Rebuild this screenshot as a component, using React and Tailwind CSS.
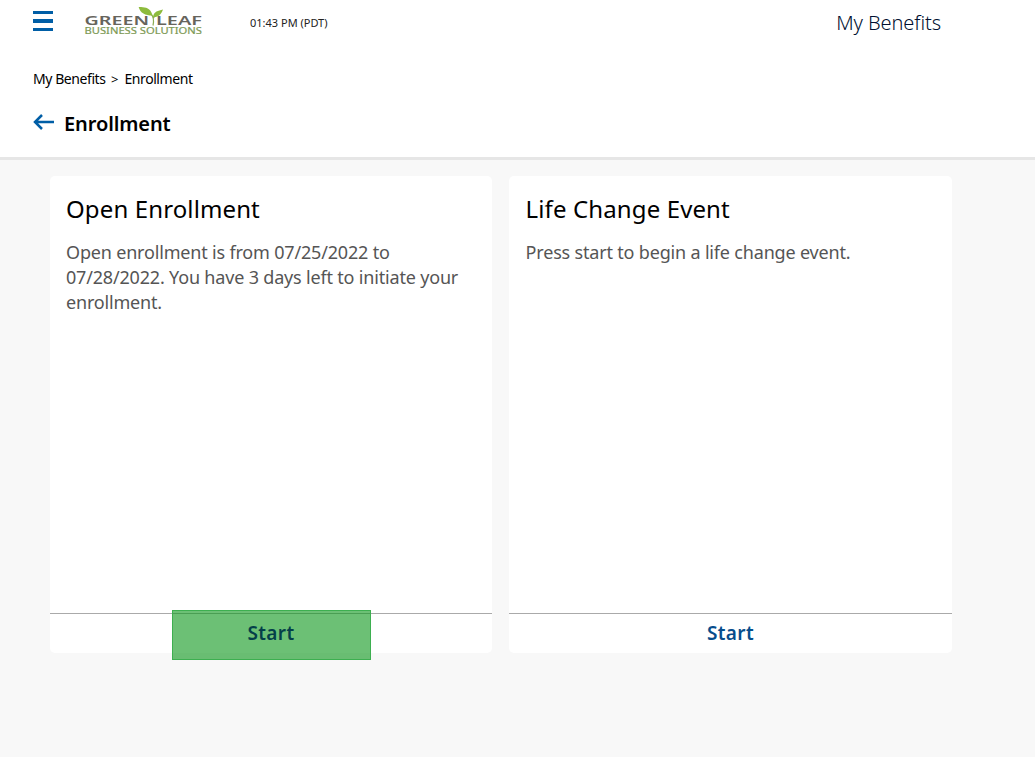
import React from 'react';

function Logo() {
  return (
    <svg className="block h-[32px] w-[120px]" viewBox="0 0 120 32">
      <g fontFamily="'Noto Sans', sans-serif">
        <text x="0.500" y="18.300" fontSize="13" fontWeight="600" fill="#66645c" textLength="64.500" lengthAdjust="spacingAndGlyphs">GREEN</text>
        <text x="72" y="18.300" fontSize="13" fontWeight="600" fill="#66645c" textLength="46" lengthAdjust="spacingAndGlyphs">LEAF</text>
        <text x="0.500" y="27.300" fontSize="9.500" fill="#7d9a55" stroke="#7d9a55" strokeWidth=".2" textLength="117.500" lengthAdjust="spacingAndGlyphs">BUSINESS SOLUTIONS</text>
      </g>
      <path d="M69 18.500C70 14 70 10 67 7M69.500 11L72 7" fill="none" stroke="#8aac50" strokeWidth="1.2" />
      <path d="M68.500 8.500C66 -1 60 1 54.500 -.5C56 6 61 8.500 68.500 8.500Z" fill="#8dbb3c" />
      <path d="M69 10C70 4 74 4 79 2.500C77 8 74 10.500 69 10Z" fill="#8dbb3c" />
    </svg>
  );
}

function Card({ title, children, highlight }) {
  return (
    <section className="flex h-[477px] flex-col rounded-[5px] bg-white">
      <div className={highlight ? 'flex-1 px-4 pt-4' : 'flex-1 pl-[16.6px] pr-4 pt-4'}>
        <h2 className="text-[24px] leading-[33px] tracking-[.12px]">{title}</h2>
        <p className="mt-[15px] text-[18px] leading-[25px] tracking-[-.18px] text-[#555]">{children}</p>
      </div>
      <div className="relative h-[40px] border-t border-[#aaa] text-center text-[19px] font-semibold leading-[38px] tracking-[.4px] text-[#074d8c]">
        <span className={highlight ? 'text-[#043f49] relative z-10' : ''}>Start</span>
        {highlight && <div className="absolute -top-[4px] left-[122px] h-[50px] w-[199px] border border-[#3daf50] bg-[#0a9619]/60" />}
      </div>
    </section>
  );
}

export default function App() {
  return (
    <div className="h-[757px] overflow-hidden bg-[#f8f8f8] font-['Noto_Sans',sans-serif] text-black">
      <header className="h-[160px] border-b-[3px] border-[#e6e6e6] bg-white">
        <div className="flex h-[46px] items-center">
          <div className="-mt-[4px] ml-[33px] flex w-[20px] flex-col gap-[5px]"><i className="h-[3px] bg-[#005ea6]" /><i className="h-[4px] bg-[#005ea6]" /><i className="h-[3px] bg-[#005ea6]" /></div>
          <div className="ml-[31px]"><Logo /></div>
          <span className="ml-[46px] text-[11px] text-[#222]">01:43 PM (PDT)</span>
          <span className="ml-auto mr-[94px] text-[20px] font-light tracking-[-.08px] text-[#001030]">My Benefits</span>
        </div>
        <nav className="flex pl-[33px] pt-[23px] text-[14px] leading-5 tracking-[-.43px]"><span className="w-[78px]">My Benefits</span><span className="w-[13.5px] text-[13px]">&gt;</span><span>Enrollment</span></nav>
        <div className="mt-[20px] flex items-center pl-[33px]"><svg className="-mt-[4px] h-[20px] w-[22px]" viewBox="0 0 22 20"><path d="M9 3 2 10l7 7M2 10h19" fill="none" stroke="#005ea6" strokeWidth="2.5" /></svg><h1 className="ml-[9px] text-[20px] font-semibold leading-[30px] tracking-[-.1px]">Enrollment</h1></div>
      </header>
      <main className="grid grid-cols-[442px_443px] gap-[17px] pl-[50px] pt-4">
        <Card title="Open Enrollment" highlight>Open enrollment is from 07/25/2022 to<br />07/28/2022. You have 3 days left to initiate your<br />enrollment.</Card>
        <Card title="Life Change Event">Press start to begin a life change event.</Card>
      </main>
    </div>
  );
}
